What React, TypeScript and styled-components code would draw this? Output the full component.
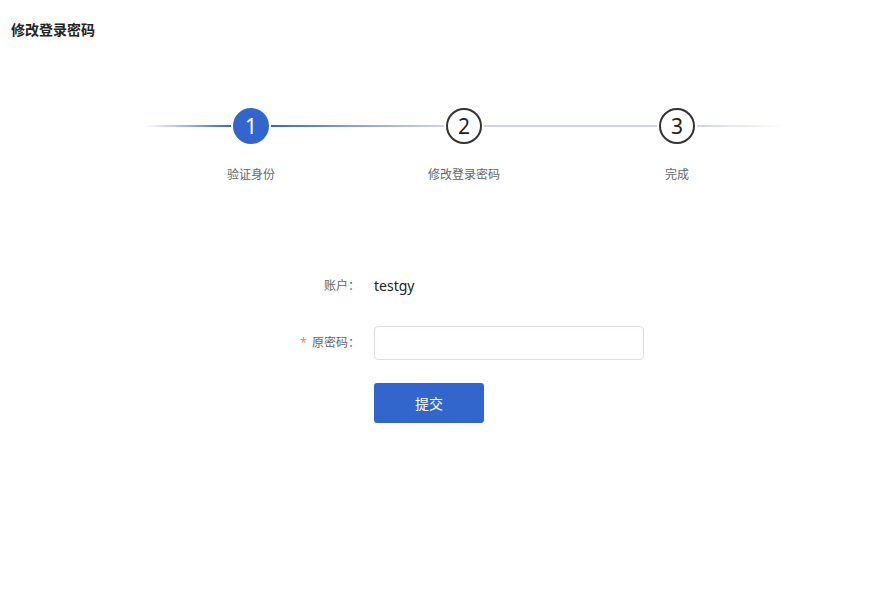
import React from "react";
import styled, { createGlobalStyle } from "styled-components";

const Global = createGlobalStyle`
  html, body { margin: 0; padding: 0; background: #fff; }
  body { font-family: "Noto Sans", "Noto Sans CJK SC", sans-serif; color: #333; }
  * { box-sizing: border-box; }
`;

const Page = styled.div`
  padding: 20px 11px 0;
  width: 869px;
  height: 601px;
`;

const Title = styled.h1`
  margin: 0;
  font-size: 14px;
  line-height: 20px;
  font-weight: 700;
  color: #222;
`;

const Steps = styled.div`
  display: flex;
  margin: 68px 0 0 133.5px;
  width: 639px;
`;

const Step = styled.div`
  width: 213px;
  display: flex;
  flex-direction: column;
  align-items: center;
`;

const Track = styled.div`
  display: flex;
  align-items: center;
  width: 100%;
  height: 36px;
`;

const Line = styled.div<{ $bg: string }>`
  flex: 1;
  height: 2px;
  background: ${(p) => p.$bg};
`;

const Circle = styled.div<{ $active?: boolean }>`
  width: 36px;
  height: 36px;
  margin: 0 2px;
  border-radius: 50%;
  flex: none;
  display: flex;
  align-items: center;
  justify-content: center;
  font-size: 21px;
  line-height: 1;
  background: ${(p) => (p.$active ? "#3366cc" : "#fff")};
  color: ${(p) => (p.$active ? "#fff" : "#222")};
  border: 2px solid ${(p) => (p.$active ? "#3366cc" : "#333")};
`;

const StepLabel = styled.div`
  margin-top: 22px;
  font-size: 12px;
  line-height: 18px;
  color: #666;
`;

const Form = styled.div`
  display: grid;
  grid-template-columns: 120px 270px;
  grid-auto-rows: auto;
  row-gap: 23px;
  margin: 85px 0 0 243px;
  align-items: center;
`;

const Label = styled.div`
  font-size: 12px;
  color: #666;
  text-align: right;
  padding-right: 14px;
  line-height: 34px;
`;

const Star = styled.span`
  color: #f08080;
  margin-right: 2px;
`;

const Value = styled.div`
  font-size: 14px;
  color: #222;
  line-height: 34px;
`;

const Input = styled.input`
  width: 270px;
  height: 34px;
  border: 1px solid #dcdfe6;
  border-radius: 4px;
  outline: none;
  padding: 0 10px;
  font-size: 14px;
`;

const Button = styled.button`
  width: 110px;
  height: 40px;
  border: none;
  border-radius: 3px;
  background: #3366cc;
  color: #fff;
  font-size: 14px;
  font-family: inherit;
  cursor: pointer;
`;

const BLUE = "#3366cc";
const MID = "#8ea3d6";
const GRAY = "#d0d4e4";

const steps = [
  { n: 1, label: "验证身份", active: true, left: `linear-gradient(to right, rgba(51,102,204,0), ${BLUE})`, right: `linear-gradient(to right, ${BLUE}, ${MID})` },
  { n: 2, label: "修改登录密码", active: false, left: `linear-gradient(to right, ${MID}, ${GRAY})`, right: GRAY },
  { n: 3, label: "完成", active: false, left: GRAY, right: `linear-gradient(to right, ${GRAY}, rgba(208,212,228,0))` },
];

export default function App() {
  return (
    <Page>
      <Global />
      <Title>修改登录密码</Title>
      <Steps>
        {steps.map((s) => (
          <Step key={s.n}>
            <Track>
              <Line $bg={s.left} />
              <Circle $active={s.active}>{s.n}</Circle>
              <Line $bg={s.right} />
            </Track>
            <StepLabel>{s.label}</StepLabel>
          </Step>
        ))}
      </Steps>
      <Form>
        <Label>账户：</Label>
        <Value>testgy</Value>
        <Label>
          <Star>*</Star> 原密码：
        </Label>
        <Input type="password" />
        <div />
        <div>
          <Button>提交</Button>
        </div>
      </Form>
    </Page>
  );
}
